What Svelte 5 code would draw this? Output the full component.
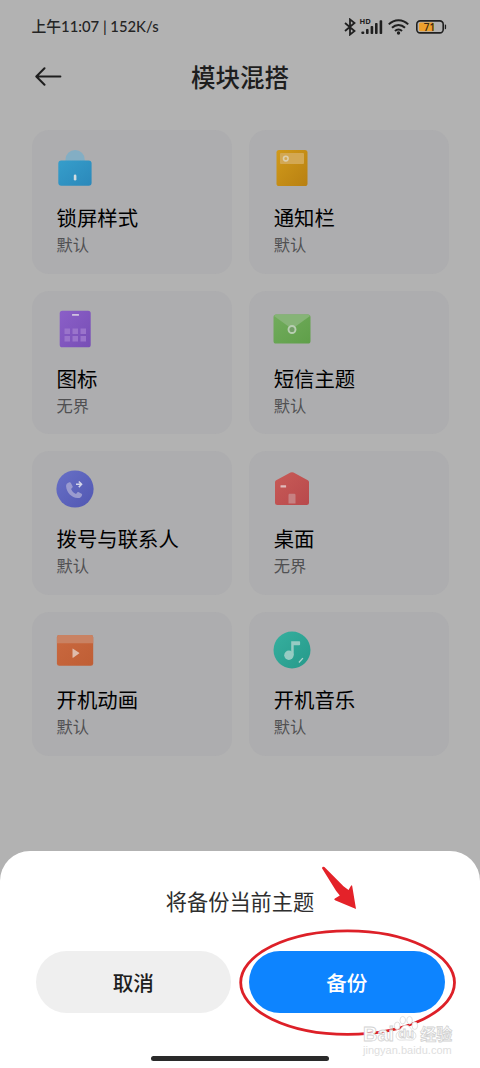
<script lang="ts">
	type Module = { icon: string; title: string; value: string };

	const modules: Module[] = [
		{ icon: 'lock', title: '锁屏样式', value: '默认' },
		{ icon: 'notification', title: '通知栏', value: '默认' },
		{ icon: 'icons', title: '图标', value: '无界' },
		{ icon: 'message', title: '短信主题', value: '默认' },
		{ icon: 'dialer', title: '拨号与联系人', value: '默认' },
		{ icon: 'home', title: '桌面', value: '无界' },
		{ icon: 'animation', title: '开机动画', value: '默认' },
		{ icon: 'music', title: '开机音乐', value: '默认' }
	];

	const gradients = [
		{ id: 'lock', from: '#369ecb', to: '#2b88ba' },
		{ id: 'notification', from: '#d19a1a', to: '#b88012' },
		{ id: 'icons', from: '#8b5fc8', to: '#774eb5' },
		{ id: 'message', from: '#72ac5d', to: '#5f9f49' },
		{ id: 'dialer', from: '#6870c6', to: '#5157b2' },
		{ id: 'home', from: '#c85b57', to: '#b8494c' },
		{ id: 'animation', from: '#ca693f', to: '#bf5e35' },
		{ id: 'music', from: '#36b09f', to: '#26998a' }
	];
</script>

<svg class="defs" width="0" height="0" aria-hidden="true">
	<defs>
		{#each gradients as g (g.id)}
			<linearGradient id={`g-${g.id}`} x1="0" y1="0" x2="1" y2="1">
				<stop offset="0" stop-color={g.from} />
				<stop offset="1" stop-color={g.to} />
			</linearGradient>
		{/each}
	</defs>
</svg>

<div class="screen">
	<div class="status">
		<span class="time">上午11:07 | 152K/s</span>
		<div class="signals">
			<svg width="12" height="18" viewBox="0 0 12 18" fill="none" stroke="#202020" stroke-width="1.8">
				<path d="M1 5l9.500 8L6 16.600V1.400L10.500 5 1 13" />
			</svg>
			<div class="cell">
				<span class="hd">HD</span>
				<svg width="23" height="16" viewBox="0 0 23 16" fill="#202020">
					<rect x="1.300" y="12.500" width="3" height="2.500" rx="1" />
					<rect x="6" y="10" width="2.600" height="5" rx="0.800" />
					<rect x="10.600" y="7" width="2.600" height="8" rx="0.800" />
					<rect x="15" y="4" width="2.600" height="11" rx="0.800" />
					<rect x="19.600" y="1.200" width="2.600" height="13.800" rx="0.800" />
				</svg>
			</div>
			<svg class="wifi" width="21" height="16" viewBox="0 0 21 16" fill="none" stroke="#202020" stroke-width="2">
				<path d="M0.800 5.400C6.200-0.200 14.800-0.200 20.200 5.400" />
				<path d="M4 8.800C7.700 5 13.300 5 17 8.800" />
				<path d="M7 12C9 9.900 12 9.900 14 12" />
				<circle cx="10.500" cy="14" r="1.700" fill="#202020" stroke="none" />
			</svg>
			<div class="battery">
				<svg width="31" height="14" viewBox="0 0 31 14">
					<rect x="3" y="2.600" width="15" height="8.600" rx="1.500" fill="#eea02c" />
					<rect x="0.800" y="0.900" width="26.400" height="12" rx="3.400" fill="none" stroke="#202020" stroke-width="1.600" />
					<path d="M28.800 4.600h.3q1 0 1 1v2.600q0 1-1 1h-.3z" fill="#202020" />
				</svg>
				<span class="level">71</span>
			</div>
		</div>
	</div>

	<header>
		<button class="back" aria-label="返回">
			<svg width="27" height="19" viewBox="0 0 27 19" fill="none" stroke="#1e1e1e" stroke-width="2" stroke-linecap="round" stroke-linejoin="round">
				<path d="M9.500 1.200L1.300 9.500l8.200 8.300M1.600 9.500H25.400" />
			</svg>
		</button>
		<h1>模块混搭</h1>
	</header>

	<main>
		{#each modules as item (item.title)}
			<div class="card">
				<svg class="icon" width="38" height="38" viewBox="0 0 38 38">
					{#if item.icon === 'lock'}
						<path d="M9.500 14V10.500a9.600 9.600 0 0 1 19.200 0V14z" fill="#83aec4" />
						<rect x="2.300" y="11.500" width="33.300" height="25.300" rx="3" fill="url(#g-lock)" />
						<rect x="17.800" y="25.500" width="2.600" height="6" rx="1.300" fill="#d3dce0" />
					{:else if item.icon === 'notification'}
						<rect x="3.500" y="1" width="31" height="36" rx="2.600" fill="url(#g-notification)" />
						<rect x="7" y="4" width="24" height="11" rx="1" fill="#d3a853" />
						<circle cx="12.800" cy="9.600" r="2.300" fill="none" stroke="#ddcfae" stroke-width="1.600" />
					{:else if item.icon === 'icons'}
						<rect x="3.700" y="0.800" width="31" height="36.500" rx="2.600" fill="url(#g-icons)" />
						<rect x="16" y="4" width="7" height="1.800" rx="0.500" fill="#d0c3e0" />
						{#each [8.5, 16.5, 24.5] as x (x)}
							<rect {x} y="18.500" width="5.500" height="5.500" fill="#9a74cb" />
							<rect {x} y="26" width="5.500" height="5.500" fill="#9a74cb" />
						{/each}
					{:else if item.icon === 'message'}
						<rect x="0.500" y="4.500" width="37" height="29" rx="2.600" fill="url(#g-message)" />
						<path d="M1 6Q1.500 4.500 3 4.500h32q1.500 0 2 1.500L19 19z" fill="#86b477" />
						<circle cx="19" cy="19.500" r="3.500" fill="#739d67" stroke="#b8ceb2" stroke-width="1.900" />
					{:else if item.icon === 'dialer'}
						<circle cx="19" cy="19" r="18.600" fill="url(#g-dialer)" />
						<path d="M13.300 12.300c-2.200.7-3.400 2-3.200 4.200.5 6.200 5.500 11 11.500 11.600 2.500.2 4-1.200 4.500-3.200.1-.5-.1-.8-.5-1.100l-3.200-1.700c-.5-.2-.8-.1-1.100.3l-1.300 1.500c-2.500-1-4-2.700-4.900-5l1.300-1.400c.4-.4.4-.7.200-1.200l-1.700-3.200c-.4-.8-.8-1-1.600-.8z" fill="#9a9bcf" />
						<path d="M20 14.300h5.500M22.800 11.500l2.800 2.800-2.800 2.800" fill="none" stroke="#d4d6e8" stroke-width="1.500" />
					{:else if item.icon === 'home'}
						<path d="M2 12.200q0-1.300 1.200-2L17.500 2.600q1.500-.8 3 0L34.800 10.200q1.200.7 1.200 2V32.500q0 2.500-2.500 2.500h-29Q2 35 2 32.500z" fill="url(#g-home)" />
						<rect x="7.500" y="15.200" width="5.600" height="2.400" rx="0.400" fill="#dfbcbc" />
						<path d="M15.500 33.500V25q0-1.200 1.200-1.200h4.600q1.200 0 1.200 1.200v8.500z" fill="#c68182" />
					{:else if item.icon === 'animation'}
						<rect x="0.900" y="4" width="36.300" height="30.800" rx="2.400" fill="url(#g-animation)" />
						<path d="M.9 12.200V6.400Q.9 4 3.300 4h31.500q2.400 0 2.400 2.400v5.800z" fill="#c98263" />
						<path d="M16.500 17.800v8.600q0 .6.600.3l6-4.100q.6-.4 0-.8l-6-4.100q-.6-.4-.6.100z" fill="#dfbcac" />
					{:else}
						<circle cx="19" cy="19" r="18.500" fill="url(#g-music)" />
						<circle cx="15.900" cy="24.200" r="4.700" fill="#97cbc3" />
						<path d="M18.200 24V10.200h8.200q.7 0 .7.700v2.600q0 .7-.7.700h-5.700V24z" fill="#97cbc3" />
						<path d="M25.900 31.500l4-4.400" stroke="#b0d6d0" stroke-width="1.300" />
					{/if}
				</svg>
				<div class="title">{item.title}</div>
				<div class="value">{item.value}</div>
			</div>
		{/each}
	</main>

	<section class="sheet">
		<p>将备份当前主题</p>
		<div class="actions">
			<button class="cancel">取消</button>
			<button class="confirm">备份</button>
		</div>
		<div class="home-bar"></div>
	</section>

	<!-- marks drawn over the sheet -->
	<svg class="marks" width="230" height="180" viewBox="0 0 230 180">
		<ellipse cx="117.600" cy="122.600" rx="106.900" ry="51.700" fill="none" stroke="#dd2028" stroke-width="2.800" />
		<path d="M92 8.200q.4-2.200 2.400-1.100L113.500 26.200l5 3.800 2.500-4.300q.9-1.200 1.200.2L126 48.900 105 40.200q-1.600-.9-.1-1.600l4.900-3-3.800-4.800z" fill="#e42229" />
	</svg>

	<div class="watermark">
		<div class="brand">
			<span class="latin">Bai</span>
			<span class="paw">
				<svg width="26" height="28" viewBox="0 0 28 29" fill="#fff" stroke="#dedede" stroke-width="1">
					<ellipse cx="4.500" cy="11" rx="3" ry="4" />
					<ellipse cx="10.500" cy="5" rx="3" ry="4" />
					<ellipse cx="17.800" cy="5" rx="3" ry="4" />
					<ellipse cx="23.500" cy="11" rx="3" ry="4" />
					<path d="M14 10.500c4 0 5 4 8 6.500 5 4 2.500 10-3 9.500-3-.4-7-.4-10 0-5.500.5-8-5.500-3-9.500 3-2.500 4-6.500 8-6.500z" />
				</svg>
				<span>du</span>
			</span>
			<span class="han">经验</span>
		</div>
		<div class="url">jingyan.baidu.com</div>
	</div>
</div>

<style>
	:global(body) {
		margin: 0;
	}

	.defs {
		position: absolute;
	}

	.screen {
		position: relative;
		width: 480px;
		height: 1068px;
		display: flex;
		flex-direction: column;
		overflow: hidden;
		background: #b2b2b2;
		color: #000;
		font-family: 'Noto Sans CJK SC', sans-serif;
	}

	.status {
		display: flex;
		align-items: center;
		justify-content: space-between;
		height: 53px;
		padding: 0 33.500px 0 31.500px;
		box-sizing: border-box;
	}

	.time {
		font-family: Lato, 'Noto Sans CJK SC', sans-serif;
		font-size: 14.800px;
		font-weight: 500;
		line-height: 20px;
		margin-top: -1px;
		color: #242424;
		white-space: pre;
	}

	.signals {
		display: flex;
		align-items: center;
	}

	.cell {
		position: relative;
		display: flex;
		margin-left: 4px;
	}

	.hd {
		position: absolute;
		left: 0;
		top: -2px;
		font: 700 7.500px/8px 'Open Sans', sans-serif;
		color: #202020;
	}

	.wifi {
		margin-left: 5px;
	}

	.battery {
		position: relative;
		display: flex;
		margin-left: 7px;
	}

	.level {
		position: absolute;
		left: 0;
		top: 0;
		width: 28px;
		text-align: center;
		font: 600 10px/14px 'Open Sans', sans-serif;
		color: #3a2c16;
	}

	header {
		display: grid;
		grid-template-columns: 80px 1fr 80px;
		align-items: center;
		height: 47px;
	}

	button {
		border: none;
		padding: 0;
		font-family: inherit;
	}

	.back {
		display: flex;
		margin-left: 35px;
		background: none;
	}

	h1 {
		margin: 0;
		text-align: center;
		font-size: 24.500px;
		font-weight: 500;
		line-height: 36px;
		color: #1e1e1e;
	}

	main {
		display: grid;
		grid-template-columns: 200px 200px;
		grid-auto-rows: 143.500px;
		gap: 17.200px;
		margin: 30px 0 0 31.500px;
	}

	.card {
		box-sizing: border-box;
		padding: 19px 25px 0;
		border-radius: 17px;
		background: #adadaf;
	}

	.icon {
		display: block;
		margin-left: -1px;
	}

	.title {
		margin-top: 15px;
		font-size: 20.400px;
		line-height: 30px;
	}

	.value {
		margin-top: 1px;
		font-size: 16.300px;
		line-height: 22px;
		color: #505052;
	}

	.sheet {
		display: flex;
		flex-direction: column;
		align-items: center;
		height: 217.500px;
		margin-top: auto;
		border-radius: 30px 30px 0 0;
		background: #fff;
	}

	.sheet p {
		margin: 34px 0 0;
		font-size: 21.200px;
		line-height: 32px;
		color: #2e2e2e;
	}

	.actions {
		display: flex;
		gap: 18px;
		margin-top: 34.500px;
	}

	.actions button {
		width: 195.500px;
		height: 62px;
		padding-bottom: 1px;
		border-radius: 31px;
		font-size: 20.600px;
		font-weight: 500;
	}

	.cancel {
		background: #efefef;
		color: #1e1e1e;
	}

	.confirm {
		background: #0d84ff;
		color: #fff;
	}

	.home-bar {
		width: 178px;
		height: 5px;
		margin-top: 43px;
		border-radius: 3px;
		background: #2a2a2a;
	}

	.marks {
		position: absolute;
		left: 230px;
		top: 860px;
	}

	.watermark {
		position: absolute;
		left: 363px;
		top: 1015px;
		width: 92px;
		font-family: 'Liberation Sans', 'Noto Sans CJK SC', sans-serif;
		font-weight: 700;
		color: #fff;
		-webkit-text-stroke: 0.800px #d2d2d2;
	}

	.brand {
		display: flex;
		align-items: flex-end;
		height: 28px;
	}

	.latin {
		font-size: 20px;
		line-height: 18px;
	}

	.paw {
		position: relative;
		display: flex;
		margin-left: -1px;
	}

	.paw span {
		position: absolute;
		left: 5px;
		bottom: 2px;
		font-size: 13px;
		line-height: 14px;
	}

	.han {
		margin-left: 1px;
		font-size: 16px;
		line-height: 16px;
	}

	.url {
		margin-top: 1px;
		font-size: 11px;
		font-weight: 400;
		line-height: 13px;
		color: #dedede;
		-webkit-text-stroke: 0;
	}
</style>
